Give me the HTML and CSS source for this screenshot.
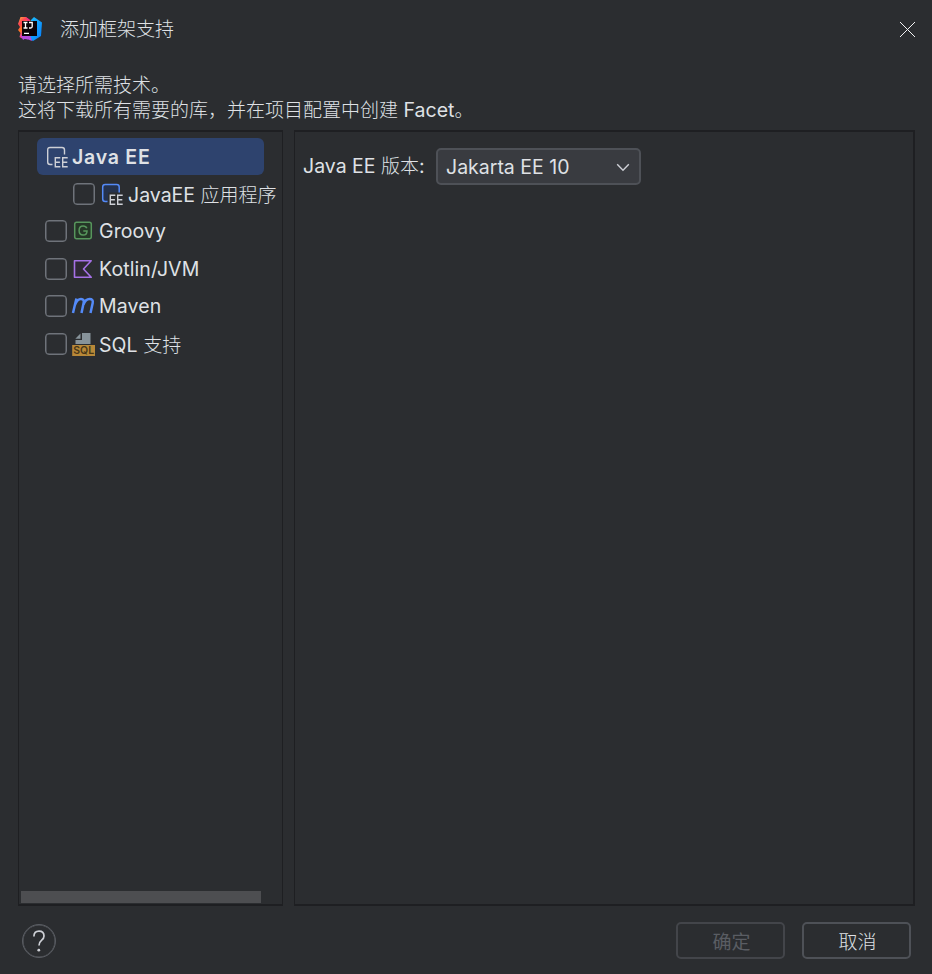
FILE: index.html
```html
<!DOCTYPE html>
<html lang="zh-CN">
<head>
<meta charset="utf-8">
<title>添加框架支持</title>
<link rel="stylesheet" href="styles.css">
</head>
<body>
<div class="dialog">
  <header class="titlebar">
    <svg class="logo" width="26" height="26" viewBox="0 0 26 26">
      <defs>
        <linearGradient id="warm" x1="0" y1="0" x2="0.5" y2="1"><stop offset="0" stop-color="#ffb43a"/><stop offset=".3" stop-color="#ff4056"/><stop offset=".55" stop-color="#ff7a20"/><stop offset=".8" stop-color="#f0389a"/><stop offset="1" stop-color="#b847e8"/></linearGradient>
        <linearGradient id="cool" x1="0" y1="0" x2="1" y2="1"><stop offset="0" stop-color="#1cc4ff"/><stop offset="1" stop-color="#087cfa"/></linearGradient>
      </defs>
      <path d="M3.500 1 9 1l5 4-3 18.500-6-1L2.500 21l1-4L1 14l2-3-2-3z" fill="url(#warm)"/>
      <path d="M9 1l4 3-2 3z" fill="#f52c88"/>
      <path d="M14 4l3-3L25 6.500 24 20l-8 5-5-3z" fill="url(#cool)"/>
      <path d="M4 19h9l2 6-5-2-1-1-3 2z" fill="#b34bdf"/>
      <path d="M5 5h15v15H5z" fill="#0b0307"/>
      <path d="M6.500 6.500h4M8.500 6.500v5.500M6.500 12h4M12 6.500h3.200v4q0 1.500-1.500 1.500h-1.700M7 17.300h5" fill="none" stroke="#fff" stroke-width="1.300"/>
    </svg>
    <h1 class="title cjk">添加框架支持</h1>
    <svg class="close" width="17" height="17" viewBox="0 0 17 17"><path d="M1 1l15 15M16 1 1 16" stroke="#f2f2f3" stroke-width="1"/></svg>
  </header>
  <div class="intro">
    <p><span class="cjk">请选择所需技术。</span></p>
    <p><span class="cjk">这将下载所有需要的库，并在项目配置中创建</span> Facet<span class="cjk">。</span></p>
  </div>
  <main class="panels">
    <section class="panel tree-panel">
      <ul class="tree">
        <li class="row selected">
          <svg class="icon" width="24" height="24" viewBox="0 0 24 24"><path d="M7.500 19.500H5.200Q2.700 19.500 2.700 17V5Q2.700 2.500 5.200 2.500H17Q19.500 2.500 19.500 5V9.500" fill="none" stroke="#ced0d6" stroke-width="1.400"/><path d="M15.300 12.700H10.300v9.100H15.300M10.300 17.200h4.600M22.700 12.700h-5v9.100h5M17.700 17.200h4.600" fill="none" stroke="#ced0d6" stroke-width="1.400"/></svg>
          <span class="label">Java EE</span>
        </li>
        <li class="row child">
          <span class="check"></span>
          <svg class="icon" width="24" height="24" viewBox="0 0 24 24"><path d="M8 19.500H3V3H19V10.500H8z" fill="#25324d"/><path d="M7.500 19.500H5.200Q2.700 19.500 2.700 17V5Q2.700 2.500 5.200 2.500H16.700Q19.200 2.500 19.200 5V10.500" fill="none" stroke="#548af7" stroke-width="1.500"/><path d="M15.300 13.200H10.300v9.100H15.300M10.300 17.700h4.600M22.700 13.200h-5v9.100h5M17.700 17.700h4.600" fill="none" stroke="#ced0d6" stroke-width="1.400"/></svg>
          <span class="label">JavaEE <span class="cjk">应用程序</span></span>
        </li>
        <li class="row">
          <span class="check"></span>
          <svg class="icon" width="24" height="24" viewBox="0 0 24 24"><rect x="3.700" y="3.200" width="16.600" height="16.600" rx="2" fill="#253627" stroke="#57965c" stroke-width="1.500"/><path d="M15.800 9.200Q15 7 12.100 7 8.100 7 8.100 11.500T12.100 16Q16 16 16 11.900H12.300" fill="none" stroke="#57965c" stroke-width="1.500"/></svg>
          <span class="label">Groovy</span>
        </li>
        <li class="row">
          <span class="check"></span>
          <svg class="icon" width="24" height="24" viewBox="0 0 24 24"><path d="M3.500 3.700H20.200L12.500 12l7.700 8.300H3.500z" fill="#2f2936" stroke="#a571e6" stroke-width="1.600" stroke-linejoin="round"/></svg>
          <span class="label">Kotlin/JVM</span>
        </li>
        <li class="row">
          <span class="check"></span>
          <svg class="icon" width="24" height="24" viewBox="0 0 24 24"><path d="M2 19 5.400 4.500M3.900 11Q6.200 5 10 5 13.500 5 12.600 9L10.500 19M12.500 10.500Q14.500 5 18.500 5 22.500 5 21.700 9L19.500 19" fill="none" stroke="#548af7" stroke-width="2.500"/></svg>
          <span class="label">Maven</span>
        </li>
        <li class="row">
          <span class="check"></span>
          <svg class="icon" width="24" height="24" viewBox="0 0 24 24"><path d="M11 1h8.500v11h-15V8H11z" fill="#87939a"/><path d="M9.500 1.500v5.200H4.300z" fill="#87939a"/><path d="M1.200 13h23v11h-23z" fill="#b88838"/><text x="12.700" y="22.300" text-anchor="middle" class="sql">SQL</text></svg>
          <span class="label">SQL <span class="cjk">支持</span></span>
        </li>
      </ul>
      <div class="scrollbar"></div>
    </section>
    <section class="panel options">
      <span class="field">Java EE <span class="cjk">版本</span>:</span>
      <div class="select"><span>Jakarta EE 10</span>
        <svg width="14" height="10" viewBox="0 0 14 10"><path d="M1.200 2.200 7 8.200l5.800-6" fill="none" stroke="#ced0d6" stroke-width="1.400"/></svg>
      </div>
    </section>
  </main>
  <footer class="footer">
    <div class="help"><svg width="32" height="32" viewBox="0 0 32 32"><path d="M10.900 11.500Q11 6.200 16 6.200T21 11Q21 13.300 18.700 15.200 16 17.400 16 20.500" fill="none" stroke="#ced0d6" stroke-width="1.700"/><circle cx="15.800" cy="25.200" r="1.400" fill="#ced0d6"/></svg></div>
    <div class="button disabled cjk">确定</div>
    <div class="button cjk">取消</div>
  </footer>
</div>
</body>
</html>
```
FILE: styles.css
```css
* { box-sizing: border-box; }
body { margin: 0; background: #2b2d30; color: #dfe1e5; font: 19.5px/25px Inter, "Noto Sans CJK SC", sans-serif; }
h1, p, ul { margin: 0; padding: 0; }
.cjk { font-family: "Noto Sans CJK SC", sans-serif; font-size: 19px; font-weight: 300; letter-spacing: 0; }
.dialog { width: 932px; height: 974px; display: flex; flex-direction: column; }
.titlebar { height: 71px; display: flex; align-items: flex-start; padding: 16px 16px 0 17px; }
.title { margin: 0 auto 0 17px; line-height: 24px; }
.close { margin-top: 5px; }
.intro { height: 59px; padding-left: 18px; white-space: nowrap; }
.intro p { height: 25px; }
.panels { height: 776px; display: flex; gap: 11px; padding: 0 17px 0 18px; }
.panel { border: solid #1e1f22; border-width: 2px 1px; }
.tree-panel { width: 265px; display: flex; flex-direction: column; justify-content: space-between; }
.tree { list-style: none; padding: 6px 0 0 18px; }
.row { height: 37.4px; display: flex; align-items: center; padding-left: 8px; white-space: nowrap; }
.row.child { padding-left: 36px; }
.row.selected { width: 227px; border-radius: 6px; background: #2e436e; font-weight: 600; letter-spacing: 0.75px; }
.check { flex: none; width: 22px; height: 22px; margin: 0 4px 0 0; border: 1px solid #6f737a; border-radius: 4px; box-shadow: inset 0 0 0 0.5px #6f737a; }
.icon { flex: none; display: block; }
.label { margin-left: 4px; padding-top: 1px; letter-spacing: 0.1px; }
.selected .label { margin-left: 3px; letter-spacing: inherit; }
.child .icon { margin-left: 1px; }
.child .label { margin-left: 4px; padding-top: 0; letter-spacing: 0; }
.sql { font: 600 10.5px Inter, sans-serif; fill: #493717; }
.scrollbar { width: 240px; height: 12px; margin: 0 0 1px 2px; background: #4d4e51; }
.options { flex: 1; display: flex; align-items: flex-start; padding: 16px 8px; border-right-width: 2px; }
.field { line-height: 34px; white-space: nowrap; width: 133px; }
.select { width: 205px; height: 37px; display: flex; align-items: center; justify-content: space-between; padding: 1px 10px 0 9px; border: 2px solid #4e5157; border-radius: 5px; background: #393b40; }
.select span { margin-left: -1px; }
.select svg { margin-right: -1px; }
.footer { flex: 1; display: flex; align-items: flex-start; padding: 16px 21px 0 22px; }
.help { width: 34px; height: 34px; margin: 2px auto 0 0; border: 1px solid #5a5d63; border-radius: 50%; box-shadow: inset 0 0 0 0.5px #5a5d63; }
.help svg { display: block; }
.button { width: 109px; height: 37px; margin-left: 17px; border: 2px solid #4e5157; border-radius: 5px; padding-left: 2px; text-align: center; line-height: 33px; }
.disabled { color: #5a5d63; border-color: #43454a; font-weight: 400; }
```
